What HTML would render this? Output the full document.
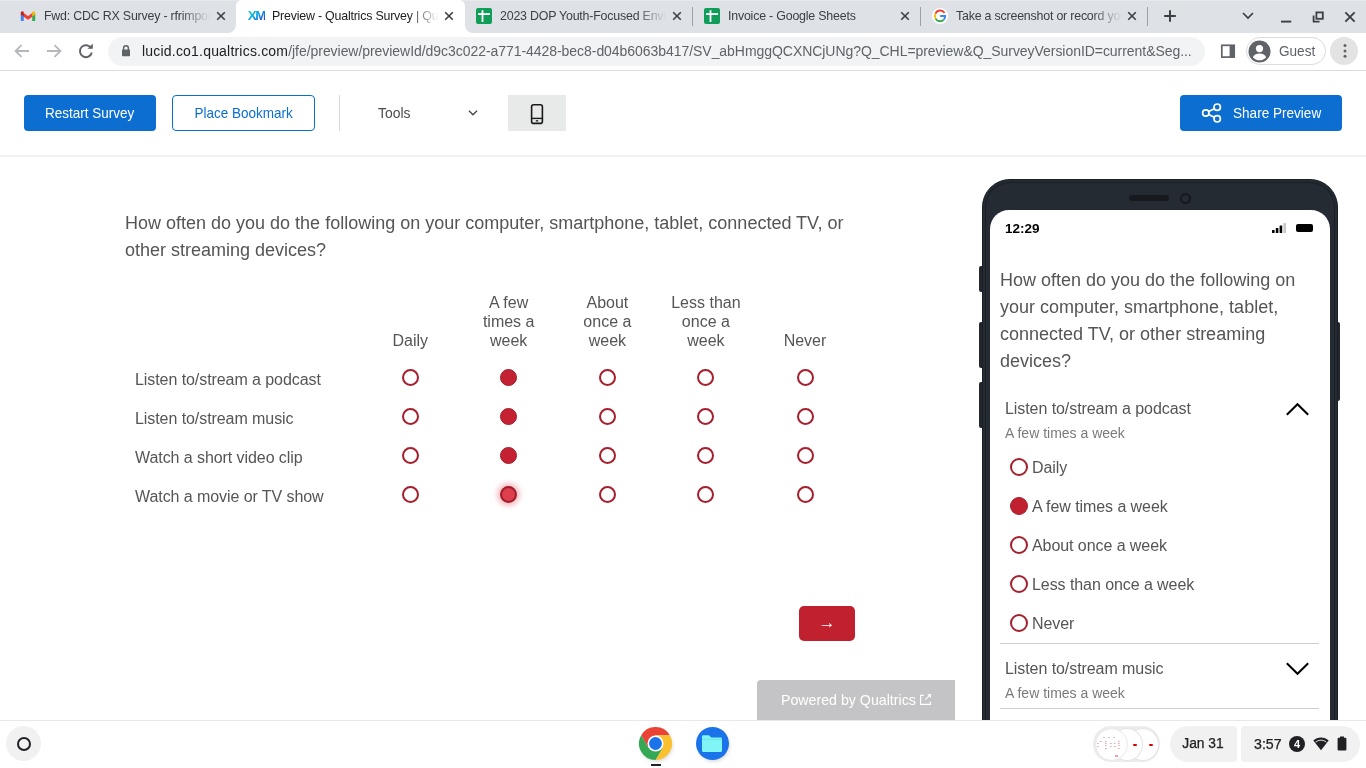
<!DOCTYPE html>
<html><head><meta charset="utf-8">
<style>
*{box-sizing:border-box;margin:0;padding:0}
html,body{width:1366px;height:768px;overflow:hidden;background:#fff;font-family:"Liberation Sans",sans-serif;-webkit-font-smoothing:antialiased}
.a{position:absolute}
.nw{white-space:nowrap}
/* tab strip */
#tabs{left:0;top:0;width:1366px;height:33px;background:#dee1e6}
.tab{top:0;height:33px}
.ttl{font-size:12.4px;letter-spacing:-0.2px;color:#3c4043;top:9px;line-height:14px;white-space:nowrap;overflow:hidden}
.fade{-webkit-mask-image:linear-gradient(to right,#000 82%,transparent 100%)}
.sep{top:7px;width:1px;height:19px;background:#9aa0a6}
#toolbar{left:0;top:33px;width:1366px;height:38px;background:#fff;border-bottom:1px solid #dadce0}
#omni{left:108px;top:37px;width:1097px;height:29px;border-radius:15px;background:#f1f3f4}
#url{left:142px;top:43px;font-size:14px;line-height:16px;color:#5f6368;white-space:nowrap;letter-spacing:-0.05px}
#url b{font-weight:400;color:#202124;letter-spacing:0.2px}
/* qualtrics header */
#qh{left:0;top:71px;width:1366px;height:86px;background:#fff;border-bottom:2px solid #f1f1f1}
.btn{height:36px;border-radius:4px;font-size:15px;line-height:36px;text-align:center}
/* survey */
.q{color:#555;font-size:18px;line-height:27px}
.lbl{color:#555;font-size:16px;line-height:19px;letter-spacing:-0.07px}
.hd{color:#555;font-size:16px;line-height:19px;text-align:center;width:90px}
.r{width:17px;height:17px;border-radius:50%;border:2px solid #a71e2c;background:#fff}
.rf{width:17px;height:17px;border-radius:50%;background:#c42232;border:1.5px solid #a11c2a}
/* shelf */
#shelf{left:0;top:720px;width:1366px;height:48px;background:#fff;border-top:1px solid #e8e8e8}
.pill{background:#f1f1f1;border-radius:17px}
#root{position:absolute;left:0;top:0;width:1366px;height:768px;will-change:transform}
</style></head><body><div id="root">

<div id="tabs" class="a"></div>
<div class="a" style="left:0;top:0;width:1366px;height:1px;background:#e6e8eb"></div>
<!-- active tab -->
<div class="a" style="left:228px;top:25px;width:245px;height:8px;background:#fff"></div>
<div class="a" style="left:220px;top:20px;width:16px;height:13px;background:#dee1e6;border-bottom-right-radius:8px"></div>
<div class="a" style="left:465px;top:20px;width:16px;height:13px;background:#dee1e6;border-bottom-left-radius:8px"></div>
<div class="a" style="left:236px;top:0;width:229px;height:33px;background:#fff;border-radius:6px 6px 0 0"></div>
<!-- tab 1 gmail -->
<svg class="a" style="left:20px;top:10px" width="16" height="12" viewBox="0 0 16 12">
<path d="M1.5 3.2 L8 8 L14.5 3.2" fill="none" stroke="#ea4335" stroke-width="3" stroke-linejoin="round"/>
<rect x="0.8" y="3.5" width="3" height="7.5" rx="0.6" fill="#4285f4"/>
<rect x="12.2" y="3.5" width="3" height="7.5" rx="0.6" fill="#34a853"/>
<path d="M12.3 2 A1.6 1.6 0 0 1 15.2 2.6 L15.2 4.6 L12.3 6.6 Z" fill="#fbbc04"/>
<path d="M0.8 2.6 A1.6 1.6 0 0 1 3.7 2 L3.7 6.6 L0.8 4.6Z" fill="#c5221f"/>
</svg>
<div class="a ttl fade" style="left:44px;width:166px">Fwd: CDC RX Survey - rfrimpong@lucidcorp</div>
<svg class="a" style="left:216px;top:11px" width="10" height="10" viewBox="0 0 10 10"><path d="M1.2 1.2L8.8 8.8M8.8 1.2L1.2 8.8" stroke="#3c4043" stroke-width="1.6"/></svg>
<!-- tab 2 XM -->
<svg class="a" style="left:247px;top:10px" width="18" height="12" viewBox="0 0 18 12">
<defs><linearGradient id="xmg" x1="0" y1="0" x2="1" y2="1"><stop offset="0" stop-color="#21dc9a"/><stop offset="0.45" stop-color="#0aa6e8"/><stop offset="1" stop-color="#3a14e0"/></linearGradient></defs>
<text x="0.8" y="10.3" font-family="Liberation Sans" font-weight="700" font-size="13.5" fill="url(#xmg)" letter-spacing="-1.6">XM</text>
</svg>
<div class="a ttl fade" style="left:272px;width:167px;color:#202124">Preview - Qualtrics Survey | Qualtrics Experience</div>
<svg class="a" style="left:444px;top:11px" width="10" height="10" viewBox="0 0 10 10"><path d="M1.2 1.2L8.8 8.8M8.8 1.2L1.2 8.8" stroke="#3c4043" stroke-width="1.6"/></svg>
<!-- tab 3 sheets -->
<svg class="a" style="left:476px;top:8px" width="16" height="16" viewBox="0 0 16 16"><rect x="0" y="0" width="16" height="16" rx="2" fill="#0f9d58"/><rect x="2" y="5.2" width="12" height="1.8" fill="#fff"/><rect x="5.6" y="2.2" width="1.8" height="11.8" fill="#fff"/></svg>
<div class="a ttl fade" style="left:500px;width:166px">2023 DOP Youth-Focused Environment</div>
<svg class="a" style="left:672px;top:11px" width="10" height="10" viewBox="0 0 10 10"><path d="M1.2 1.2L8.8 8.8M8.8 1.2L1.2 8.8" stroke="#3c4043" stroke-width="1.6"/></svg>
<div class="a sep" style="left:692px"></div>
<!-- tab 4 sheets -->
<svg class="a" style="left:704px;top:8px" width="16" height="16" viewBox="0 0 16 16"><rect x="0" y="0" width="16" height="16" rx="2" fill="#0f9d58"/><rect x="2" y="5.2" width="12" height="1.8" fill="#fff"/><rect x="5.6" y="2.2" width="1.8" height="11.8" fill="#fff"/></svg>
<div class="a ttl" style="left:728px;width:170px">Invoice - Google Sheets</div>
<svg class="a" style="left:900px;top:11px" width="10" height="10" viewBox="0 0 10 10"><path d="M1.2 1.2L8.8 8.8M8.8 1.2L1.2 8.8" stroke="#3c4043" stroke-width="1.6"/></svg>
<div class="a sep" style="left:920px"></div>
<!-- tab 5 google -->
<svg class="a" style="left:932px;top:8px" width="16" height="16" viewBox="0 0 16 16">
<circle cx="8" cy="8" r="8" fill="#fff"/>
<path d="M12.6 5 A5.2 5.2 0 0 0 3.4 5.6" fill="none" stroke="#ea4335" stroke-width="1.9"/>
<path d="M3.4 5.6 A5.2 5.2 0 0 0 3.6 10.8" fill="none" stroke="#fbbc04" stroke-width="1.9"/>
<path d="M3.6 10.8 A5.2 5.2 0 0 0 11.8 11.6" fill="none" stroke="#34a853" stroke-width="1.9"/>
<path d="M11.8 11.6 A5.2 5.2 0 0 0 13.2 8 L8.1 8" fill="none" stroke="#4285f4" stroke-width="1.9"/>
</svg>
<div class="a ttl fade" style="left:956px;width:166px">Take a screenshot or record your screen - Google</div>
<svg class="a" style="left:1127px;top:11px" width="10" height="10" viewBox="0 0 10 10"><path d="M1.2 1.2L8.8 8.8M8.8 1.2L1.2 8.8" stroke="#3c4043" stroke-width="1.6"/></svg>
<div class="a sep" style="left:1147px"></div>
<svg class="a" style="left:1163px;top:9px" width="14" height="14" viewBox="0 0 14 14"><path d="M7 1.2V12.8M1.2 7H12.8" stroke="#3c4043" stroke-width="2"/></svg>
<svg class="a" style="left:1241px;top:11px" width="14" height="9" viewBox="0 0 14 9"><path d="M2 2L7 7L12 2" fill="none" stroke="#3c4043" stroke-width="1.7"/></svg>
<svg class="a" style="left:1279px;top:19px" width="14" height="5" viewBox="0 0 14 5"><path d="M2 2.6H12.2" stroke="#3c4043" stroke-width="1.9"/></svg>
<svg class="a" style="left:1311px;top:10px" width="14" height="14" viewBox="0 0 14 14"><path d="M2.6 5.5V11.6H8.6" fill="none" stroke="#3c4043" stroke-width="1.8"/><rect x="5.4" y="2.4" width="6.4" height="6.4" fill="none" stroke="#3c4043" stroke-width="1.8"/></svg>
<svg class="a" style="left:1343px;top:10px" width="14" height="14" viewBox="0 0 14 14"><path d="M2.4 2.4L11.6 11.6M11.6 2.4L2.4 11.6" stroke="#3c4043" stroke-width="1.9"/></svg>
<div id="toolbar" class="a"></div>
<div id="omni" class="a"></div>
<svg class="a" style="left:13px;top:43px" width="18" height="16" viewBox="0 0 18 16"><path d="M16 8H3M8.5 2.2L2.5 8L8.5 13.8" fill="none" stroke="#b4b7bb" stroke-width="1.8"/></svg>
<svg class="a" style="left:45px;top:43px" width="18" height="16" viewBox="0 0 18 16"><path d="M2 8H15M9.5 2.2L15.5 8L9.5 13.8" fill="none" stroke="#b4b7bb" stroke-width="1.8"/></svg>
<svg class="a" style="left:77px;top:42px" width="18" height="18" viewBox="0 0 18 18"><path d="M14.2 6.3A6 6 0 1 0 14.8 10.5" fill="none" stroke="#5f6368" stroke-width="1.9"/><path d="M10.5 6.8H15.8V1.5Z" fill="#5f6368"/></svg>
<svg class="a" style="left:121px;top:44px" width="10" height="13" viewBox="0 0 10 13"><path d="M2.6 6V4.2A2.4 2.4 0 0 1 7.4 4.2V6" fill="none" stroke="#5f6368" stroke-width="1.5"/><rect x="1" y="5.6" width="8" height="6.6" rx="0.8" fill="#5f6368"/></svg>
<svg class="a" style="left:1220px;top:43px" width="16" height="16" viewBox="0 0 16 16"><rect x="1.8" y="2.3" width="12.4" height="11.8" fill="none" stroke="#5f6368" stroke-width="1.7"/><rect x="9.6" y="2.3" width="4.6" height="11.8" fill="#5f6368"/></svg>
<div class="a" style="left:1246px;top:37px;width:80px;height:28px;border-radius:14px;border:1px solid #dadce0;background:#fff"></div>
<svg class="a" style="left:1248px;top:40px" width="23" height="23" viewBox="0 0 23 23"><circle cx="11.5" cy="11.5" r="11" fill="#5f6368"/><circle cx="11.5" cy="8.6" r="3.6" fill="#fff"/><path d="M4.8 17.2C6.2 14.6 8.8 13.5 11.5 13.5S16.8 14.6 18.2 17.2A8.8 8.8 0 0 1 4.8 17.2Z" fill="#fff"/></svg>
<div class="a nw" style="left:1279px;top:43px;font-size:14.3px;line-height:16px;color:#5f6368;transform:scaleX(0.95);transform-origin:0 0">Guest</div>
<div class="a" style="left:1330px;top:37px;width:28px;height:28px;border-radius:50%;background:#e3e3e3"></div>
<svg class="a" style="left:1341.5px;top:43px" width="6" height="16" viewBox="0 0 6 16"><circle cx="3" cy="2.6" r="1.5" fill="#5f6368"/><circle cx="3" cy="7.9" r="1.5" fill="#5f6368"/><circle cx="3" cy="13.2" r="1.5" fill="#5f6368"/></svg>
<div id="url" class="a"><b>lucid.co1.qualtrics.com</b>/jfe/preview/previewId/d9c3c022-a771-4428-bec8-d04b6063b417/SV_abHmggQCXNCjUNg?Q_CHL=preview&amp;Q_SurveyVersionID=current&amp;Seg...</div>

<div id="qh" class="a"></div>
<div class="a btn" style="left:24px;top:95px;width:132px;background:#0b6ed0;color:#fff"><span style="display:inline-block;transform:scaleX(0.9)">Restart Survey</span></div>
<div class="a btn" style="left:172px;top:95px;width:143px;border:1px solid #0b6ed0;color:#0b6ed0;line-height:34px"><span style="display:inline-block;transform:scaleX(0.9)">Place Bookmark</span></div>
<div class="a" style="left:339px;top:95px;width:1px;height:36px;background:#d9d9d9"></div>
<div class="a nw" style="left:378px;top:104px;font-size:15.5px;line-height:18px;color:#4b4b4b;transform:scaleX(0.9);transform-origin:0 0">Tools</div>
<svg class="a" style="left:467px;top:109px" width="12" height="8" viewBox="0 0 12 8"><path d="M2 1.8L6 5.8L10 1.8" fill="none" stroke="#444" stroke-width="1.3"/></svg>
<div class="a" style="left:508px;top:95px;width:58px;height:36px;background:#e8e9e9"></div>
<svg class="a" style="left:529px;top:103px" width="16" height="22" viewBox="0 0 16 22"><rect x="2.6" y="1.8" width="10.8" height="18.6" rx="2" fill="none" stroke="#1a1a1a" stroke-width="1.6"/><path d="M2.6 15.4H13.4" stroke="#1a1a1a" stroke-width="1.4"/><rect x="6.8" y="17.2" width="2.4" height="1.3" fill="#1a1a1a"/></svg>
<div class="a" style="left:1180px;top:95px;width:162px;height:36px;border-radius:4px;background:#0b6ed0"></div>
<svg class="a" style="left:1201px;top:103px" width="22" height="20" viewBox="0 0 22 20"><circle cx="4.8" cy="10" r="3.2" fill="none" stroke="#fff" stroke-width="1.7"/><circle cx="16.2" cy="4.2" r="3.2" fill="none" stroke="#fff" stroke-width="1.7"/><circle cx="16.2" cy="15.8" r="3.2" fill="none" stroke="#fff" stroke-width="1.7"/><path d="M7.7 8.5L13.3 5.7M7.7 11.5L13.3 14.3" stroke="#fff" stroke-width="1.7"/></svg>
<div class="a nw" style="left:1233px;top:104px;font-size:15.5px;line-height:18px;color:#fff;transform:scaleX(0.875);transform-origin:0 0">Share Preview</div>

<!-- survey body -->
<div class="a q nw" style="left:125px;top:210px">How often do you do the following on your computer, smartphone, tablet, connected TV, or</div>
<div class="a q nw" style="left:125px;top:237px">other streaming devices?</div>
<div class="a hd" style="left:365.3px;top:330.8px">Daily</div>
<div class="a hd" style="left:463.7px;top:292.8px">A few<br>times a<br>week</div>
<div class="a hd" style="left:562.4px;top:292.8px">About<br>once a<br>week</div>
<div class="a hd" style="left:660.9px;top:292.8px">Less than<br>once a<br>week</div>
<div class="a hd" style="left:760.0px;top:330.8px">Never</div>
<div class="a lbl nw" style="left:135px;top:370px">Listen to/stream a podcast</div>
<div class="a r" style="left:401.8px;top:368.9px"></div>
<div class="a rf" style="left:500.2px;top:368.9px"></div>
<div class="a r" style="left:598.9px;top:368.9px"></div>
<div class="a r" style="left:697.4px;top:368.9px"></div>
<div class="a r" style="left:796.5px;top:368.9px"></div>
<div class="a lbl nw" style="left:135px;top:409px">Listen to/stream music</div>
<div class="a r" style="left:401.8px;top:407.9px"></div>
<div class="a rf" style="left:500.2px;top:407.9px"></div>
<div class="a r" style="left:598.9px;top:407.9px"></div>
<div class="a r" style="left:697.4px;top:407.9px"></div>
<div class="a r" style="left:796.5px;top:407.9px"></div>
<div class="a lbl nw" style="left:135px;top:448px">Watch a short video clip</div>
<div class="a r" style="left:401.8px;top:446.9px"></div>
<div class="a rf" style="left:500.2px;top:446.9px"></div>
<div class="a r" style="left:598.9px;top:446.9px"></div>
<div class="a r" style="left:697.4px;top:446.9px"></div>
<div class="a r" style="left:796.5px;top:446.9px"></div>
<div class="a lbl nw" style="left:135px;top:487px">Watch a movie or TV show</div>
<div class="a r" style="left:401.8px;top:485.9px"></div>
<div class="a" style="left:500.2px;top:485.9px;width:17px;height:17px;border-radius:50%;background:#dd3f4d;border:2px solid #a11c2a;box-shadow:0 0 5px 3px rgba(225,70,85,0.35)"></div>
<div class="a r" style="left:598.9px;top:485.9px"></div>
<div class="a r" style="left:697.4px;top:485.9px"></div>
<div class="a r" style="left:796.5px;top:485.9px"></div>
<div class="a" style="left:799px;top:606px;width:56px;height:35px;border-radius:5px;background:#c1202f"></div>
<div class="a" style="left:799px;top:606px;width:56px;height:35px;line-height:34px;text-align:center;color:#fff;font-size:17px">&#8594;</div>
<div class="a" style="left:757px;top:680px;width:198px;height:40px;border-radius:4px 0 0 0;background:#c4c4c6"></div>
<div class="a nw" style="left:781px;top:692px;font-size:14.2px;line-height:16px;color:#fff">Powered by Qualtrics</div>
<svg class="a" style="left:919px;top:693px" width="13" height="13" viewBox="0 0 13 13"><path d="M4.8 2.4H1.6V11.4H11.4V8.4" fill="none" stroke="#fff" stroke-width="1.2"/><path d="M6.4 6.6L11.6 1.4" stroke="#fff" stroke-width="1.1"/><path d="M8.2 1.2H12V5Z" fill="#fff"/></svg>

<!-- phone -->
<div class="a" style="left:979px;top:266px;width:5px;height:26px;border-radius:2px 0 0 2px;background:#22272e"></div>
<div class="a" style="left:979px;top:322px;width:5px;height:46px;border-radius:2px 0 0 2px;background:#22272e"></div>
<div class="a" style="left:979px;top:382px;width:5px;height:46px;border-radius:2px 0 0 2px;background:#22272e"></div>
<div class="a" style="left:1336px;top:322px;width:4px;height:79px;border-radius:0 2px 2px 0;background:#22272e"></div>
<div class="a" style="left:982px;top:179px;width:356px;height:620px;border-radius:28px;background:#252b33;border:1px solid #1b1f25;box-shadow:inset 0 0 0 2px #252b33,inset 0 0 0 3px #1b1f25"></div>
<div class="a" style="left:990px;top:210px;width:340px;height:600px;border-radius:19px 19px 0 0;background:#fff"></div>
<div class="a" style="left:1129px;top:195px;width:40px;height:6px;border-radius:3px;background:#16191d"></div>
<div class="a" style="left:1180px;top:193px;width:11px;height:11px;border-radius:50%;border:2px solid #16191d"></div>
<div class="a nw" style="left:1005px;top:221px;font-size:13.5px;line-height:16px;font-weight:700;color:#000">12:29</div>
<svg class="a" style="left:1271px;top:222px" width="16" height="12" viewBox="0 0 16 12"><rect x="1" y="8" width="2.6" height="3" rx="0.5" fill="#000"/><rect x="4.8" y="6" width="2.6" height="5" rx="0.5" fill="#000"/><rect x="8.6" y="3.5" width="2.6" height="7.5" rx="0.5" fill="#000"/><rect x="12.4" y="1" width="2.6" height="10" rx="0.5" fill="#c8c8c8"/></svg>
<div class="a" style="left:1296px;top:224px;width:17px;height:8px;border-radius:2px;background:#000"></div>
<div class="a" style="left:1000px;top:266.5px;width:320px;font-size:18px;line-height:27px;color:#555">How often do you do the following on your computer, smartphone, tablet, connected TV, or other streaming devices?</div>
<div class="a lbl nw" style="left:1005px;top:399px">Listen to/stream a podcast</div>
<svg class="a" style="left:1284px;top:401px" width="27" height="16" viewBox="0 0 27 16"><path d="M2.8 13.8L13.5 3.2L24.2 13.8" fill="none" stroke="#000" stroke-width="2"/></svg>
<div class="a nw" style="left:1005px;top:425px;font-size:14px;line-height:16px;color:#7a7a7a">A few times a week</div>
<div class="a" style="left:1010px;top:457.8px;width:18px;height:18px;border-radius:50%;border:2px solid #a71e2c;background:#fff"></div>
<div class="a lbl nw" style="left:1032px;top:458px">Daily</div>
<div class="a" style="left:1010px;top:496.8px;width:18px;height:18px;border-radius:50%;background:#c0202f;border:1px solid #a31f2b"></div>
<div class="a lbl nw" style="left:1032px;top:497px">A few times a week</div>
<div class="a" style="left:1010px;top:535.8px;width:18px;height:18px;border-radius:50%;border:2px solid #a71e2c;background:#fff"></div>
<div class="a lbl nw" style="left:1032px;top:536px">About once a week</div>
<div class="a" style="left:1010px;top:574.8px;width:18px;height:18px;border-radius:50%;border:2px solid #a71e2c;background:#fff"></div>
<div class="a lbl nw" style="left:1032px;top:575px">Less than once a week</div>
<div class="a" style="left:1010px;top:613.8px;width:18px;height:18px;border-radius:50%;border:2px solid #a71e2c;background:#fff"></div>
<div class="a lbl nw" style="left:1032px;top:614px">Never</div>
<div class="a" style="left:1000px;top:643px;width:319px;height:1px;background:#cfcfcf"></div>
<div class="a lbl nw" style="left:1005px;top:659px">Listen to/stream music</div>
<svg class="a" style="left:1284px;top:660px" width="27" height="17" viewBox="0 0 27 17"><path d="M2.8 3.2L13.5 13.8L24.2 3.2" fill="none" stroke="#000" stroke-width="2"/></svg>
<div class="a nw" style="left:1005px;top:685px;font-size:14px;line-height:16px;color:#7a7a7a">A few times a week</div>
<div class="a" style="left:1000px;top:708px;width:319px;height:1px;background:#cfcfcf"></div>

<div id="shelf" class="a"></div>
<div class="a" style="left:6px;top:726px;width:35px;height:35px;border-radius:50%;background:#f1f1f1"></div>
<div class="a" style="left:16.5px;top:736.5px;width:14px;height:14px;border-radius:50%;border:2.2px solid #202124"></div>
<!-- chrome -->
<div class="a" style="left:640px;top:729px;width:33px;height:33px;border-radius:50%;background:rgba(0,0,0,0.12);filter:blur(1.5px)"></div>
<svg class="a" style="left:639px;top:727px" width="33" height="33" viewBox="-16.5 -16.5 33 33">
<path d="M14.29 -8.25A16.5 16.5 0 0 0 -14.29 -8.25L-7.14 4.125L0 -8.25Z" fill="#ea4335"/>
<path d="M0 16.5A16.5 16.5 0 0 0 14.29 -8.25L0 -8.25L7.14 4.125Z" fill="#fbc02d"/>
<path d="M-14.29 -8.25A16.5 16.5 0 0 0 0 16.5L7.14 4.125L-7.14 4.125Z" fill="#34a853"/>
<circle r="8" fill="#fff"/><circle r="6.4" fill="#1a73e8"/>
</svg>
<div class="a" style="left:651px;top:764px;width:10px;height:2px;background:#202124"></div>
<!-- files -->
<div class="a" style="left:697px;top:729px;width:33px;height:33px;border-radius:50%;background:rgba(0,0,0,0.12);filter:blur(1.5px)"></div>
<div class="a" style="left:695.5px;top:727px;width:33px;height:33px;border-radius:50%;background:#1a73e8"></div>
<svg class="a" style="left:701px;top:734px" width="22" height="19" viewBox="0 0 22 19"><path d="M1 2.5A1.2 1.2 0 0 1 2.2 1.3H8L10.2 3.4H19.8A1.2 1.2 0 0 1 21 4.6V16.8A1.2 1.2 0 0 1 19.8 18H2.2A1.2 1.2 0 0 1 1 16.8Z" fill="#7ff5f5"/><path d="M1 5.4H21" stroke="#5fd8e8" stroke-width="0.6"/></svg>
<!-- holding space -->
<div class="a" style="left:1093px;top:726px;width:67px;height:36px;border-radius:18px;background:#ececec"></div>
<div class="a" style="left:1127px;top:727.5px;width:32px;height:33px;border-radius:50%;background:#fff;border:1px solid #e4e4e4"></div>
<div class="a" style="left:1111px;top:727.5px;width:32px;height:33px;border-radius:50%;background:#fff;border:1px solid #e4e4e4"></div>
<div class="a" style="left:1095px;top:727.5px;width:33px;height:33px;border-radius:50%;background:#fff;border:1px solid #e8e8e8"></div>
<div class="a" style="left:1133px;top:743.5px;width:4px;height:2px;border-radius:1px;background:#d00"></div>
<div class="a" style="left:1149px;top:743.5px;width:4px;height:2px;border-radius:1px;background:#d00"></div>
<svg class="a" style="left:1095px;top:733px" width="30" height="26" viewBox="0 0 30 26">
<g fill="#d33" opacity="0.45">
<rect x="5" y="8" width="1.6" height="1" /><rect x="10" y="8" width="1.6" height="1"/><rect x="23" y="8" width="1.6" height="1"/>
<rect x="2" y="10" width="1.6" height="1"/><rect x="10" y="10" width="1.6" height="1"/><rect x="15" y="10" width="1.6" height="1"/><rect x="19" y="10" width="1.6" height="1"/><rect x="23" y="10" width="1.6" height="1"/>
<rect x="2" y="13" width="1.6" height="1"/><rect x="10" y="12" width="1.6" height="1"/><rect x="15" y="13" width="1.6" height="1"/><rect x="19" y="13" width="1.6" height="1"/><rect x="23" y="12" width="1.6" height="1"/>
<rect x="10" y="15" width="1.6" height="1"/><rect x="23" y="15" width="1.6" height="1"/>
<rect x="20" y="22" width="3" height="2" opacity="2"/>
</g>
<g fill="#bbb"><rect x="8" y="4" width="2" height="0.8"/><rect x="13" y="4" width="2" height="0.8"/><rect x="18" y="4" width="2" height="0.8"/></g>
</svg>
<!-- date -->
<div class="a" style="left:1169.5px;top:726px;width:67px;height:35.5px;border-radius:18px 4px 4px 18px;background:#f1f1f1"></div>
<div class="a nw" style="left:1182.3px;top:736px;font-size:13.8px;line-height:16px;color:#202124;-webkit-text-stroke:0.25px #202124">Jan 31</div>
<!-- status -->
<div class="a" style="left:1241px;top:726px;width:119px;height:35.5px;border-radius:4px 18px 18px 4px;background:#f1f1f1"></div>
<div class="a nw" style="left:1254px;top:736px;font-size:14.2px;line-height:16px;color:#202124;-webkit-text-stroke:0.25px #202124">3:57</div>
<div class="a" style="left:1289px;top:736px;width:16px;height:16px;border-radius:50%;background:#202124;color:#fff;font-size:11px;line-height:16px;text-align:center;font-weight:700">4</div>
<svg class="a" style="left:1313px;top:737px" width="16" height="14" viewBox="0 0 16 14"><path d="M0.3 3.6A11 11 0 0 1 15.7 3.6L8 13.2Z" fill="#202124"/><path d="M2.6 5.2A8 8 0 0 1 13.4 5.2" fill="none" stroke="#f1f1f1" stroke-width="0.9"/></svg>
<svg class="a" style="left:1337px;top:736px" width="10" height="15" viewBox="0 0 10 15"><rect x="3" y="0.5" width="4" height="2" fill="#202124"/><rect x="0.6" y="1.8" width="8.8" height="12.8" rx="1" fill="#202124"/></svg>
</div></body></html>
